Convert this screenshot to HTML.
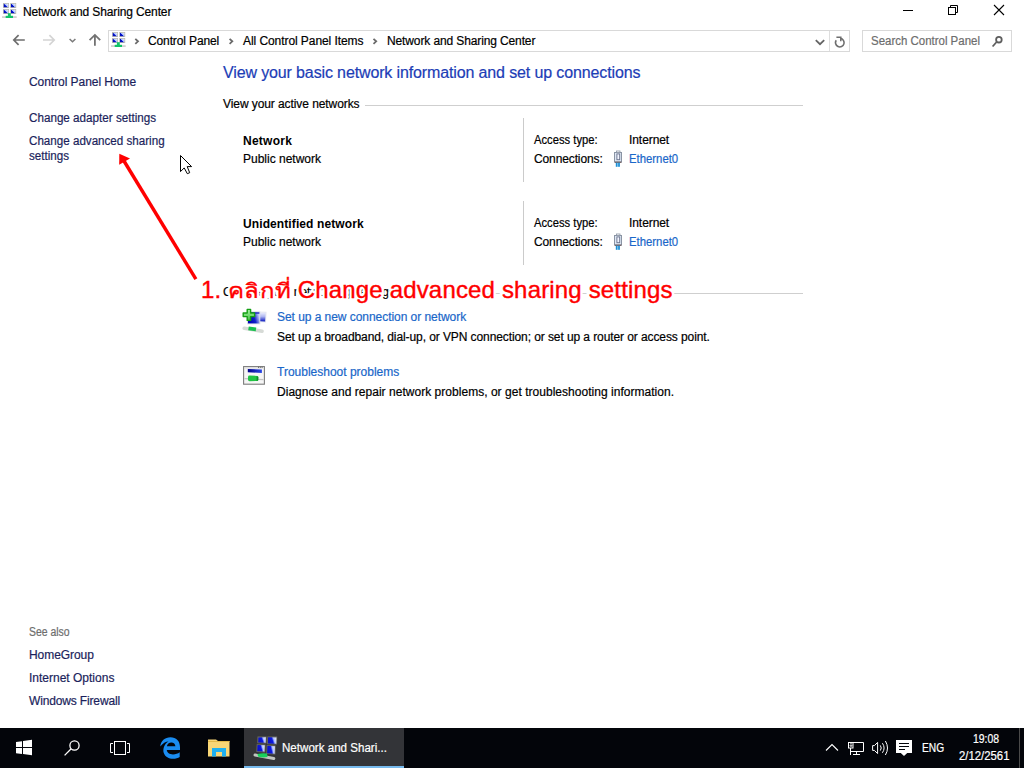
<!DOCTYPE html>
<html><head><meta charset="utf-8">
<style>
html,body{margin:0;padding:0;width:1024px;height:768px;overflow:hidden;background:#fff;}
body{position:relative;font-family:"Liberation Sans",sans-serif;font-size:12px;color:#000;}
.t{position:absolute;white-space:nowrap;line-height:17px;font-size:12px;-webkit-text-stroke:0.2px currentColor;}
.nav{color:#1b1f5c;}
.lnk{color:#1a67c9;}
.hl{position:absolute;height:1px;background:#cfcfcf;}
.vl{position:absolute;width:1px;background:#cbcbcb;}
svg{position:absolute;overflow:visible;}
#tb{position:absolute;left:0;top:728px;width:1024px;height:40px;background:#03050a;}
.w{color:#fff;}
</style></head><body>

<!-- Title bar -->
<svg width="0" height="0" style="position:absolute">
 <defs>
  <linearGradient id="scr" x1="0" y1="1" x2="1" y2="0.2">
   <stop offset="0" stop-color="#0008b8"/><stop offset="0.45" stop-color="#0010c8"/><stop offset="0.6" stop-color="#a8bcff"/><stop offset="1" stop-color="#e8eeff"/>
  </linearGradient>
  <symbol id="nsc" viewBox="0 0 16 16">
   <rect x="2" y="1" width="6" height="5" fill="#bdbdb2"/><rect x="2.8" y="1.8" width="4.4" height="3.4" fill="url(#scr)"/>
   <rect x="9.2" y="1" width="6" height="5" fill="#bdbdb2"/><rect x="10" y="1.8" width="4.4" height="3.4" fill="url(#scr)"/>
   <rect x="2" y="7" width="6" height="5" fill="#bdbdb2"/><rect x="2.8" y="7.8" width="4.4" height="3.4" fill="url(#scr)"/>
   <rect x="9.2" y="7" width="6" height="5" fill="#bdbdb2"/><rect x="10" y="7.8" width="4.4" height="3.4" fill="url(#scr)"/>
   <rect x="1" y="14.2" width="14.7" height="2.4" fill="#d2d2d0"/>
   <rect x="4.7" y="13.8" width="7.3" height="2.9" fill="#12c468"/>
   <rect x="6.9" y="11.2" width="2.9" height="3" fill="#12c468"/>
  </symbol>
  <symbol id="eth" viewBox="0 0 20 20">
   <rect x="6.5" y="4.5" width="7" height="9.5" fill="#dfe8f4" stroke="#8a94a4"/>
   <rect x="8.4" y="3" width="3.6" height="1.6" fill="#fff" stroke="#8a94a4" stroke-width="0.8"/>
   <rect x="8.9" y="5.9" width="2.8" height="5.8" fill="#f2f5ff" stroke="#68708a" stroke-width="0.9"/>
   <rect x="6.8" y="13.7" width="6.6" height="1" fill="#5a4040"/>
   <rect x="7.8" y="14.7" width="1.8" height="4.1" fill="#1c8fd6"/>
   <rect x="10.1" y="14.7" width="1.8" height="4.1" fill="#1c8fd6"/>
  </symbol>
 </defs>
</svg>
<svg style="left:1px;top:2px" width="16" height="16"><use href="#nsc"/></svg>
<div class="t" style="left:23px;top:4px;letter-spacing:-0.12px">Network and Sharing Center</div>

<!-- window controls -->
<svg style="left:0;top:0" width="1024" height="30">
  <line x1="903" y1="10.5" x2="913" y2="10.5" stroke="#000" stroke-width="1"/>
  <rect x="948.5" y="7.5" width="7" height="7" fill="none" stroke="#000"/>
  <path d="M950.5 7.5V5.5H957.5V12.5H955.5" fill="none" stroke="#000"/>
  <path d="M994 5L1004 15M1004 5L994 15" stroke="#000" stroke-width="1.1"/>
</svg>

<!-- Address row -->
<svg style="left:0;top:0" width="1024" height="60">
  <path d="M14 40H24.8M18.6 35.2L13.8 40L18.6 44.8" fill="none" stroke="#6e6e6e" stroke-width="1.7"/>
  <path d="M43 40H54M49.4 35.2L54.2 40L49.4 44.8" fill="none" stroke="#d4d4d4" stroke-width="1.7"/>
  <path d="M69.6 39L72.5 41.8L75.4 39" fill="none" stroke="#7a7a7a" stroke-width="1.5"/>
  <path d="M94.9 35V45.8M89.6 40.2L94.9 34.9L100.2 40.2" fill="none" stroke="#727272" stroke-width="1.8"/>
  <rect x="108.5" y="30.5" width="741" height="21" fill="none" stroke="#d9d9d9"/>
  <line x1="829.5" y1="31" x2="829.5" y2="51" stroke="#dedede"/>
  <path d="M815.8 40.2L820 44.2L824.2 40.2" fill="none" stroke="#646464" stroke-width="1.8"/>
  <path d="M836.2 40.3A4.3 4.3 0 1 0 840.4 38.4" fill="none" stroke="#6e6e6e" stroke-width="1.6"/>
  <path d="M836.4 37.2H840.8V41.2" fill="none" stroke="#6e6e6e" stroke-width="1.5"/>
  <path d="M135.3 38.8L138 41.3L135.3 43.8" fill="none" stroke="#6a6a6a" stroke-width="1.8"/>
  <path d="M229.6 38.8L232.3 41.3L229.6 43.8" fill="none" stroke="#6a6a6a" stroke-width="1.8"/>
  <path d="M373.5 38.8L376.2 41.3L373.5 43.8" fill="none" stroke="#6a6a6a" stroke-width="1.8"/>
  <rect x="862.5" y="30.5" width="149" height="21" fill="none" stroke="#d9d9d9"/>
  <circle cx="998.9" cy="39.7" r="2.8" fill="none" stroke="#5e5e5e" stroke-width="1.8"/>
  <line x1="996.6" y1="42" x2="992.6" y2="46.5" stroke="#5e5e5e" stroke-width="1.8"/>
</svg>
<svg style="left:110px;top:31px" width="16" height="16"><use href="#nsc"/></svg>
<div class="t" style="left:148px;top:33px;letter-spacing:-0.12px">Control Panel</div>
<div class="t" style="left:243px;top:33px;letter-spacing:-0.07px">All Control Panel Items</div>
<div class="t" style="left:387px;top:33px;letter-spacing:-0.12px">Network and Sharing Center</div>
<div class="t" style="left:871px;top:33px;color:#6d6d6d;transform:scaleX(0.955);transform-origin:0 0">Search Control Panel</div>

<!-- Left pane -->
<div class="t nav" style="left:29px;top:74px;letter-spacing:-0.05px">Control Panel Home</div>
<div class="t nav" style="left:29px;top:110px;transform:scaleX(0.972);transform-origin:0 0">Change adapter settings</div>
<div class="t nav" style="left:29px;top:133px;transform:scaleX(0.968);transform-origin:0 0">Change advanced sharing</div>
<div class="t nav" style="left:29px;top:148px;transform:scaleX(0.968);transform-origin:0 0">settings</div>

<div class="t" style="left:29px;top:624px;color:#6d6d6d;transform:scaleX(0.87);transform-origin:0 0">See also</div>
<div class="t nav" style="left:29px;top:647px;letter-spacing:-0.07px">HomeGroup</div>
<div class="t nav" style="left:29px;top:670px">Internet Options</div>
<div class="t nav" style="left:29px;top:693px;letter-spacing:-0.15px">Windows Firewall</div>

<!-- Main -->
<div class="t" style="left:223px;top:62px;font-size:16px;line-height:22px;color:#1c3db6;letter-spacing:-0.13px">View your basic network information and set up connections</div>
<div class="t" style="left:223px;top:96px;letter-spacing:-0.08px">View your active networks</div>
<div class="hl" style="left:365px;top:105px;width:438px"></div>

<div class="t" style="left:243px;top:133px;font-weight:bold;letter-spacing:0.26px;-webkit-text-stroke:0">Network</div>
<div class="t" style="left:243px;top:151px">Public network</div>
<div class="vl" style="left:523px;top:118px;height:64px"></div>
<div class="t" style="left:534px;top:132px;transform:scaleX(0.935);transform-origin:0 0">Access type:</div>
<div class="t" style="left:629px;top:132px;letter-spacing:-0.07px">Internet</div>
<div class="t" style="left:534px;top:151px;letter-spacing:-0.12px">Connections:</div>
<div class="t lnk" style="left:629px;top:151px;transform:scaleX(0.945);transform-origin:0 0">Ethernet0</div>
<svg style="left:608px;top:148px" width="20" height="20"><use href="#eth"/></svg>

<div class="t" style="left:243px;top:216px;font-weight:bold;letter-spacing:0.1px;-webkit-text-stroke:0">Unidentified network</div>
<div class="t" style="left:243px;top:234px">Public network</div>
<div class="vl" style="left:523px;top:201px;height:64px"></div>
<div class="t" style="left:534px;top:215px;transform:scaleX(0.935);transform-origin:0 0">Access type:</div>
<div class="t" style="left:629px;top:215px;letter-spacing:-0.07px">Internet</div>
<div class="t" style="left:534px;top:234px;letter-spacing:-0.12px">Connections:</div>
<div class="t lnk" style="left:629px;top:234px;transform:scaleX(0.945);transform-origin:0 0">Ethernet0</div>
<svg style="left:608px;top:231px" width="20" height="20"><use href="#eth"/></svg>

<div class="t" style="left:223px;top:284px;letter-spacing:-0.1px">Change your networking settings</div>
<div class="hl" style="left:398px;top:293px;width:405px"></div>

<!-- setup icon -->
<svg style="left:240px;top:304px" width="30" height="30" viewBox="0 0 30 30">
  <defs>
   <linearGradient id="scr2" x1="0" y1="0.3" x2="1" y2="0">
    <stop offset="0" stop-color="#0008b8"/><stop offset="0.45" stop-color="#1020c8"/><stop offset="0.85" stop-color="#b8c2f6"/><stop offset="1" stop-color="#dde2ff"/>
   </linearGradient>
   <linearGradient id="scr2b" x1="0" y1="0" x2="0" y2="1">
    <stop offset="0" stop-color="#eef0ff"/><stop offset="0.45" stop-color="#b0b8f0"/><stop offset="1" stop-color="#0a18c0"/>
   </linearGradient>
   <linearGradient id="grn" x1="0" y1="0" x2="0" y2="1">
    <stop offset="0" stop-color="#a4f4a0"/><stop offset="1" stop-color="#48c448"/>
   </linearGradient>
  </defs>
  <path d="M15 7.4L26.6 7.8L26 18.4L15 18Z" fill="#e4e7f0"/>
  <path d="M16 8.4L25.6 8.8L25.1 17.4L16 17Z" fill="url(#scr2b)"/>
  <rect x="7" y="7.4" width="13.3" height="12.9" fill="#d8dce6"/>
  <rect x="8" y="8.3" width="11.4" height="11.1" fill="url(#scr2)"/>
  <rect x="8" y="8.3" width="11.4" height="1.4" fill="#1a22c4"/>
  <line x1="4.2" y1="24.2" x2="22" y2="27.3" stroke="#d6dad6" stroke-width="3.6" stroke-linecap="round"/>
  <line x1="8.5" y1="24.3" x2="16" y2="25.4" stroke="#1cc050" stroke-width="3.8"/>
  <path d="M7.2 5.4H10.6V9H14.6V12.6H10.6V16.4H7.2V12.6H3.2V9H7.2Z" fill="url(#grn)" stroke="#14a014" stroke-width="1.4" stroke-linejoin="round"/>
</svg>
<div class="t lnk" style="left:277px;top:309px;letter-spacing:-0.05px">Set up a new connection or network</div>
<div class="t" style="left:277px;top:329px;letter-spacing:-0.09px">Set up a broadband, dial-up, or VPN connection; or set up a router or access point.</div>

<!-- troubleshoot icon -->
<svg style="left:240px;top:360px" width="30" height="30" viewBox="0 0 30 30">
  <defs>
   <linearGradient id="blu" x1="0" y1="0" x2="1" y2="0">
    <stop offset="0" stop-color="#000088"/><stop offset="1" stop-color="#2a48e8"/>
   </linearGradient>
  </defs>
  <rect x="3.6" y="6.6" width="20.8" height="17.6" fill="#f6f6f6" stroke="#7c7c7c" stroke-width="1.1"/>
  <rect x="4.2" y="7.2" width="19.6" height="1.3" fill="#dcdcdc"/>
  <path d="M18 7.3h1M19.8 7.3h1M21.6 7.3h1" stroke="#555" stroke-width="1"/>
  <path d="M7.8 8.9L21.9 9.6V12.9L7.8 12.3Z" fill="url(#blu)"/>
  <line x1="4.5" y1="18.6" x2="23.5" y2="19.6" stroke="#c4c4c4" stroke-width="1.2"/>
  <path d="M8 17Q8 15.6 9.6 15.6L17.4 15.9Q18.3 16 18.3 17L18.2 20Q18.2 21 17.3 21L9.6 21.2Q8 21.2 8 19.8Z" fill="#22c444"/>
  <path d="M16.6 16L18.3 17V20.2L16.6 21Z" fill="#0e8a2a"/>
</svg>
<div class="t lnk" style="left:277px;top:364px">Troubleshoot problems</div>
<div class="t" style="left:277px;top:384px;letter-spacing:0.03px">Diagnose and repair network problems, or get troubleshooting information.</div>

<!-- Annotation -->
<div class="t" style="left:201px;top:276px;font-size:24px;line-height:28px;color:#fff;-webkit-text-stroke:5px #fff;letter-spacing:0.17px">1. <span style="display:inline-block;transform:scaleY(0.86);transform-origin:0 22px">คลิกที่</span> Change advanced sharing settings</div>
<div class="t" style="left:201px;top:276px;font-size:24px;line-height:28px;color:#ff0000;-webkit-text-stroke:0.4px #ff0000;letter-spacing:0.17px">1. <span style="display:inline-block;transform:scaleY(0.86);transform-origin:0 22px">คลิกที่</span> Change advanced sharing settings</div>
<svg style="left:0;top:0" width="300" height="300">
  <line x1="124" y1="161" x2="195.9" y2="279.2" stroke="#ff0000" stroke-width="3.4"/>
  <path d="M119.3 153.8L130 158.4L119.2 164.8Z" fill="#ff0000"/>
</svg>

<!-- cursor -->
<svg style="left:180px;top:155px" width="13" height="20" viewBox="0 0 13 20">
  <path d="M0.5 0.5V16.6L4.2 12.9L7.3 18.7L9.7 17.7L7.2 11.6H11.6Z" fill="#fff" stroke="#000" stroke-width="1" stroke-linejoin="miter"/>
</svg>

<!-- Taskbar -->
<div id="tb"></div>
<div style="position:absolute;left:244px;top:728px;width:160px;height:40px;background:#333438"></div>
<div style="position:absolute;left:244px;top:766px;width:160px;height:2px;background:#76b9ed"></div>
<div style="position:absolute;left:1019px;top:728px;width:1px;height:40px;background:#4a4a4a"></div>
<svg style="left:0;top:728px" width="1024" height="40">
  <!-- start -->
  <path d="M16 14L22 13.2V19H16Z M23 13L32 11.8V19H23Z M16 20H22V26L16 25.3Z M23 20H32V27.3L23 26.1Z" fill="#fff"/>
  <!-- search -->
  <circle cx="74.5" cy="17.5" r="4.6" fill="none" stroke="#fff" stroke-width="1.3"/>
  <line x1="71.2" y1="20.8" x2="64.6" y2="27.4" stroke="#fff" stroke-width="1.3"/>
  <!-- task view -->
  <rect x="114.5" y="13.5" width="11" height="13" fill="none" stroke="#fff"/>
  <path d="M113 15.5H110.5V24.5H113M127 15.5H129.5V24.5H127" fill="none" stroke="#fff"/>
  <!-- edge -->
  <path d="M170.5 9.3C165 9.3 160.5 13 160.3 18.6C162.5 15 166 13.5 168.5 13.4C164 16 162.8 21 163.6 24.5C165 29 169 30.8 173 30.8C175.8 30.8 178 30 179.7 29V24.2C178 25.5 175.5 26.4 173 26.4C169.5 26.4 167 24.5 166.8 22H180V19.2C180 13 176.2 9.3 170.5 9.3ZM166.9 18.3C167.3 16 169 14.4 171.3 14.4C173.8 14.4 175.2 16 175.4 18.3Z" fill="#1a8cf0"/>
  <!-- explorer -->
  <path d="M208 11.5H216L218 13H229.5V28.5H208Z" fill="#f8d676"/>
  <rect x="208" y="13" width="21.5" height="1" fill="#e2b84a"/>
  <path d="M212 20H226V28.5H222V24H216V28.5H212Z" fill="#1fb0ef"/>
</svg>
<svg style="left:252px;top:734px" width="28" height="28" viewBox="0 0 28 28">
  <defs>
   <linearGradient id="scr3" x1="0" y1="0" x2="1" y2="-0.25">
    <stop offset="0" stop-color="#0a10c8"/><stop offset="0.38" stop-color="#0a18e0"/><stop offset="0.58" stop-color="#b0c0ff"/><stop offset="1" stop-color="#f4f6ff"/>
   </linearGradient>
  </defs>
  <path d="M5.5 2.6L14.6 2.4L14.4 9.6L5.3 9.3Z" fill="#6c6c64"/><path d="M6.4 3.4L13.8 3.2L13.6 8.8L6.2 8.5Z" fill="url(#scr3)"/>
  <path d="M15.3 2.4L25.2 2.6L25 10.6L15.1 10.2Z" fill="#6c6c64"/><path d="M16.1 3.2L24.4 3.4L24.2 9.8L15.9 9.5Z" fill="url(#scr3)"/>
  <path d="M4.7 10.2L13.5 10.5L13.2 18.4L4.4 18Z" fill="#6c6c64"/><path d="M5.5 11L12.7 11.3L12.4 17.6L5.2 17.2Z" fill="url(#scr3)"/>
  <path d="M14.6 11L23.7 11.4L23.4 20.6L14.3 20Z" fill="#6c6c64"/><path d="M15.4 11.8L22.9 12.2L22.6 19.8L15.1 19.2Z" fill="url(#scr3)"/>
  <line x1="3" y1="21" x2="21.8" y2="24.4" stroke="#c0c4c0" stroke-width="3" stroke-linecap="round"/>
  <path d="M5.5 20Q10 18.8 15 19.5L15.5 23Q10 24 6 22.5Z" fill="#18d05a"/>
</svg>
<div class="t w" style="left:282px;top:740px;transform:scaleX(0.965);transform-origin:0 0">Network and Shari...</div>

<!-- tray -->
<svg style="left:0;top:728px" width="1024" height="40">
  <path d="M826 22.5L832 16.5L838 22.5" fill="none" stroke="#fff" stroke-width="1.1"/>
  <path d="M853 14.5H863.5V23.5H850.5" fill="none" stroke="#fff"/>
  <rect x="848.5" y="14.5" width="4.5" height="5.5" fill="none" stroke="#fff"/>
  <path d="M850 15.9H852M850.2 17V18.2H851.8V17" fill="none" stroke="#fff" stroke-width="0.9"/>
  <path d="M850.5 20V27M856.5 23.5V26.5M853 26.5H860" fill="none" stroke="#fff"/>
  <path d="M872.6 17.6H874.4L877.6 14.4V25.6L874.4 22.4H872.6Z" fill="none" stroke="#fff"/>
  <path d="M880.3 17.4Q882.2 20 880.3 22.6M882.4 15.2Q885.8 20 882.4 24.8M885.4 13Q889.6 20 885.4 27" fill="none" stroke="#fff"/>
  <path d="M896 12H912V25H907.2L904 28L900.8 25H896Z" fill="#fff"/>
  <path d="M899 15.5H909M899 18.5H909M899 21.5H905" stroke="#03050a" stroke-width="1"/>
</svg>
<div class="t w" style="left:922px;top:740px;transform:scaleX(0.85);transform-origin:0 0">ENG</div>
<div class="t w" style="left:973px;top:731px;transform:scaleX(0.87);transform-origin:0 0">19:08</div>
<div class="t w" style="left:959px;top:748px;transform:scaleX(0.945);transform-origin:0 0">2/12/2561</div>

</body></html>
